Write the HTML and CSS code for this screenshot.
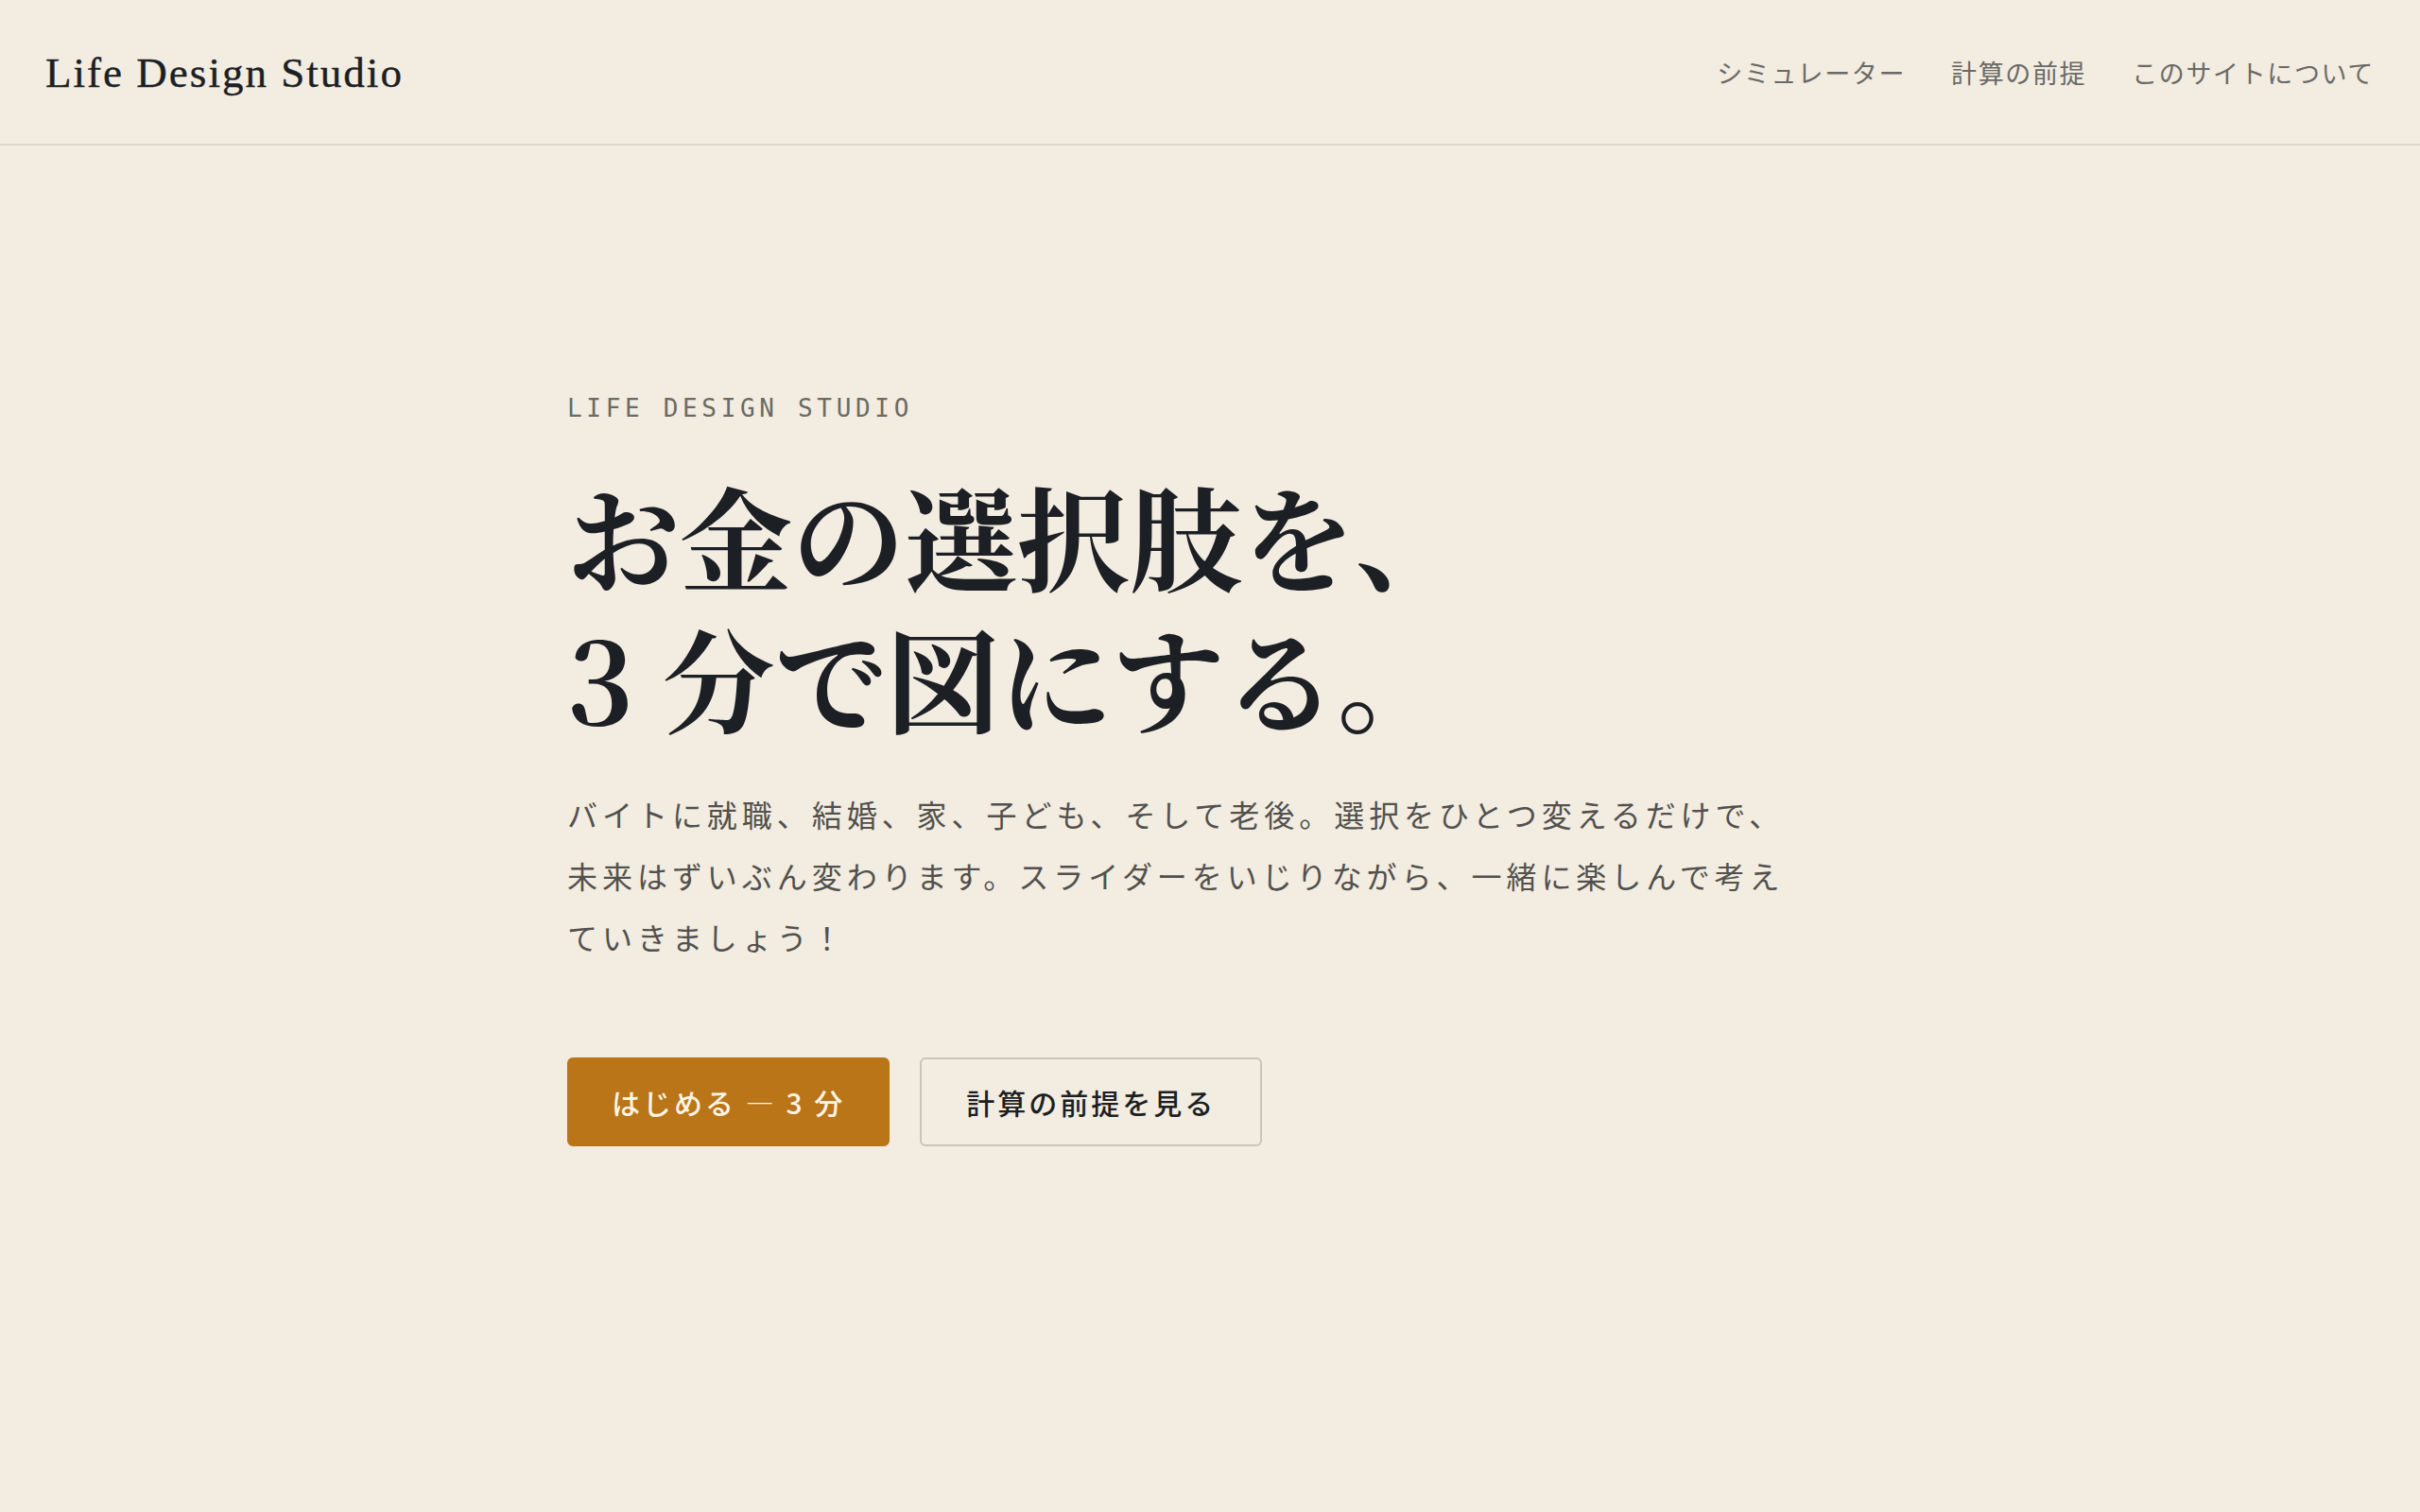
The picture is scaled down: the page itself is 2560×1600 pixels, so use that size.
FILE: index.html
```html
<!DOCTYPE html>
<html lang="ja">
<head>
<meta charset="utf-8">
<title>Life Design Studio</title>
<link rel="stylesheet" href="styles.css">
</head>
<body>
<header class="site-header">
  <a class="logo" href="#">Life Design Studio</a>
  <nav class="nav">
    <a href="#">シミュレーター</a>
    <a href="#">計算の前提</a>
    <a href="#">このサイトについて</a>
  </nav>
</header>
<main class="hero">
  <p class="eyebrow">LIFE DESIGN STUDIO</p>
  <h1 class="title"><span class="title-line">お金の選択肢を、</span><span class="title-line">3 分で図にする。</span></h1>
  <p class="lead">バイトに就職、結婚、家、子ども、そして老後。選択をひとつ変えるだけで、未来はずいぶん変わります。スライダーをいじりながら、一緒に楽しんで考えていきましょう！</p>
  <div class="actions">
    <a class="btn btn-primary" href="#">はじめる — 3 分</a>
    <a class="btn btn-secondary" href="#">計算の前提を見る</a>
  </div>
</main>
</body>
</html>
```

FILE: styles.css
```css
* { box-sizing: border-box; }
html, body { margin: 0; padding: 0; }
body {
  background: #f2ece1;
  color: #1c1f24;
  font-family: "Noto Sans CJK JP", "Noto Sans", sans-serif;
  min-height: 1600px;
}
a { text-decoration: none; color: inherit; }

.site-header {
  height: 154px;
  display: flex;
  align-items: center;
  justify-content: space-between;
  padding: 0 48px 0 48px;
  border-bottom: 2px solid #dcd7cb;
}
.logo {
  font-family: "Liberation Serif", "Noto Serif CJK JP", serif;
  font-size: 45px;
  letter-spacing: 0.045em;
  color: #1c1f24;
  padding-top: 2px;
  -webkit-text-stroke: 0.4px #1c1f24;
}
.nav {
  display: flex;
  gap: 48px;
}
.nav a {
  font-size: 27px;
  letter-spacing: 0.06em;
  color: #6b6a66;
  font-weight: 400;
}

.hero {
  width: 1360px;
  margin: 0 auto;
  padding-top: 259px;
}
.eyebrow {
  margin: 0;
  font-family: "DejaVu Sans Mono", "Liberation Mono", monospace;
  font-size: 26px;
  line-height: 39px;
  letter-spacing: 0.18em;
  color: #6b6a63;
}
.title {
  margin: 39px 0 0 0;
  font-family: "Noto Serif CJK JP", "Noto Serif JP", "Liberation Serif", serif;
  font-size: 119px;
  line-height: 150px;
  font-weight: 700;
  color: #1c1f24;
  letter-spacing: 0;
}
.title-line {
  display: block;
  height: 150px;
}
.lead {
  margin: 38px 0 0 0;
  max-width: 1305px;
  font-size: 32px;
  line-height: 65px;
  letter-spacing: 0.155em;
  color: #52514d;
  font-weight: 400;
}
.actions {
  margin-top: 95px;
  display: flex;
  gap: 32px;
}
.btn {
  display: inline-block;
  font-size: 30px;
  line-height: 38px;
  letter-spacing: 0.1em;
  font-weight: 500;
  padding: 26px 47px;
  border: 2px solid transparent;
  border-radius: 6px;
}
.btn-primary {
  background: #b97517;
  border-color: #b97517;
  color: #fbf4e6;
  padding-left: 45px;
  padding-right: 45px;
}
.btn-secondary {
  background: #f2ece1;
  border-color: #c9c5ba;
  color: #1c1f24;
}
```
